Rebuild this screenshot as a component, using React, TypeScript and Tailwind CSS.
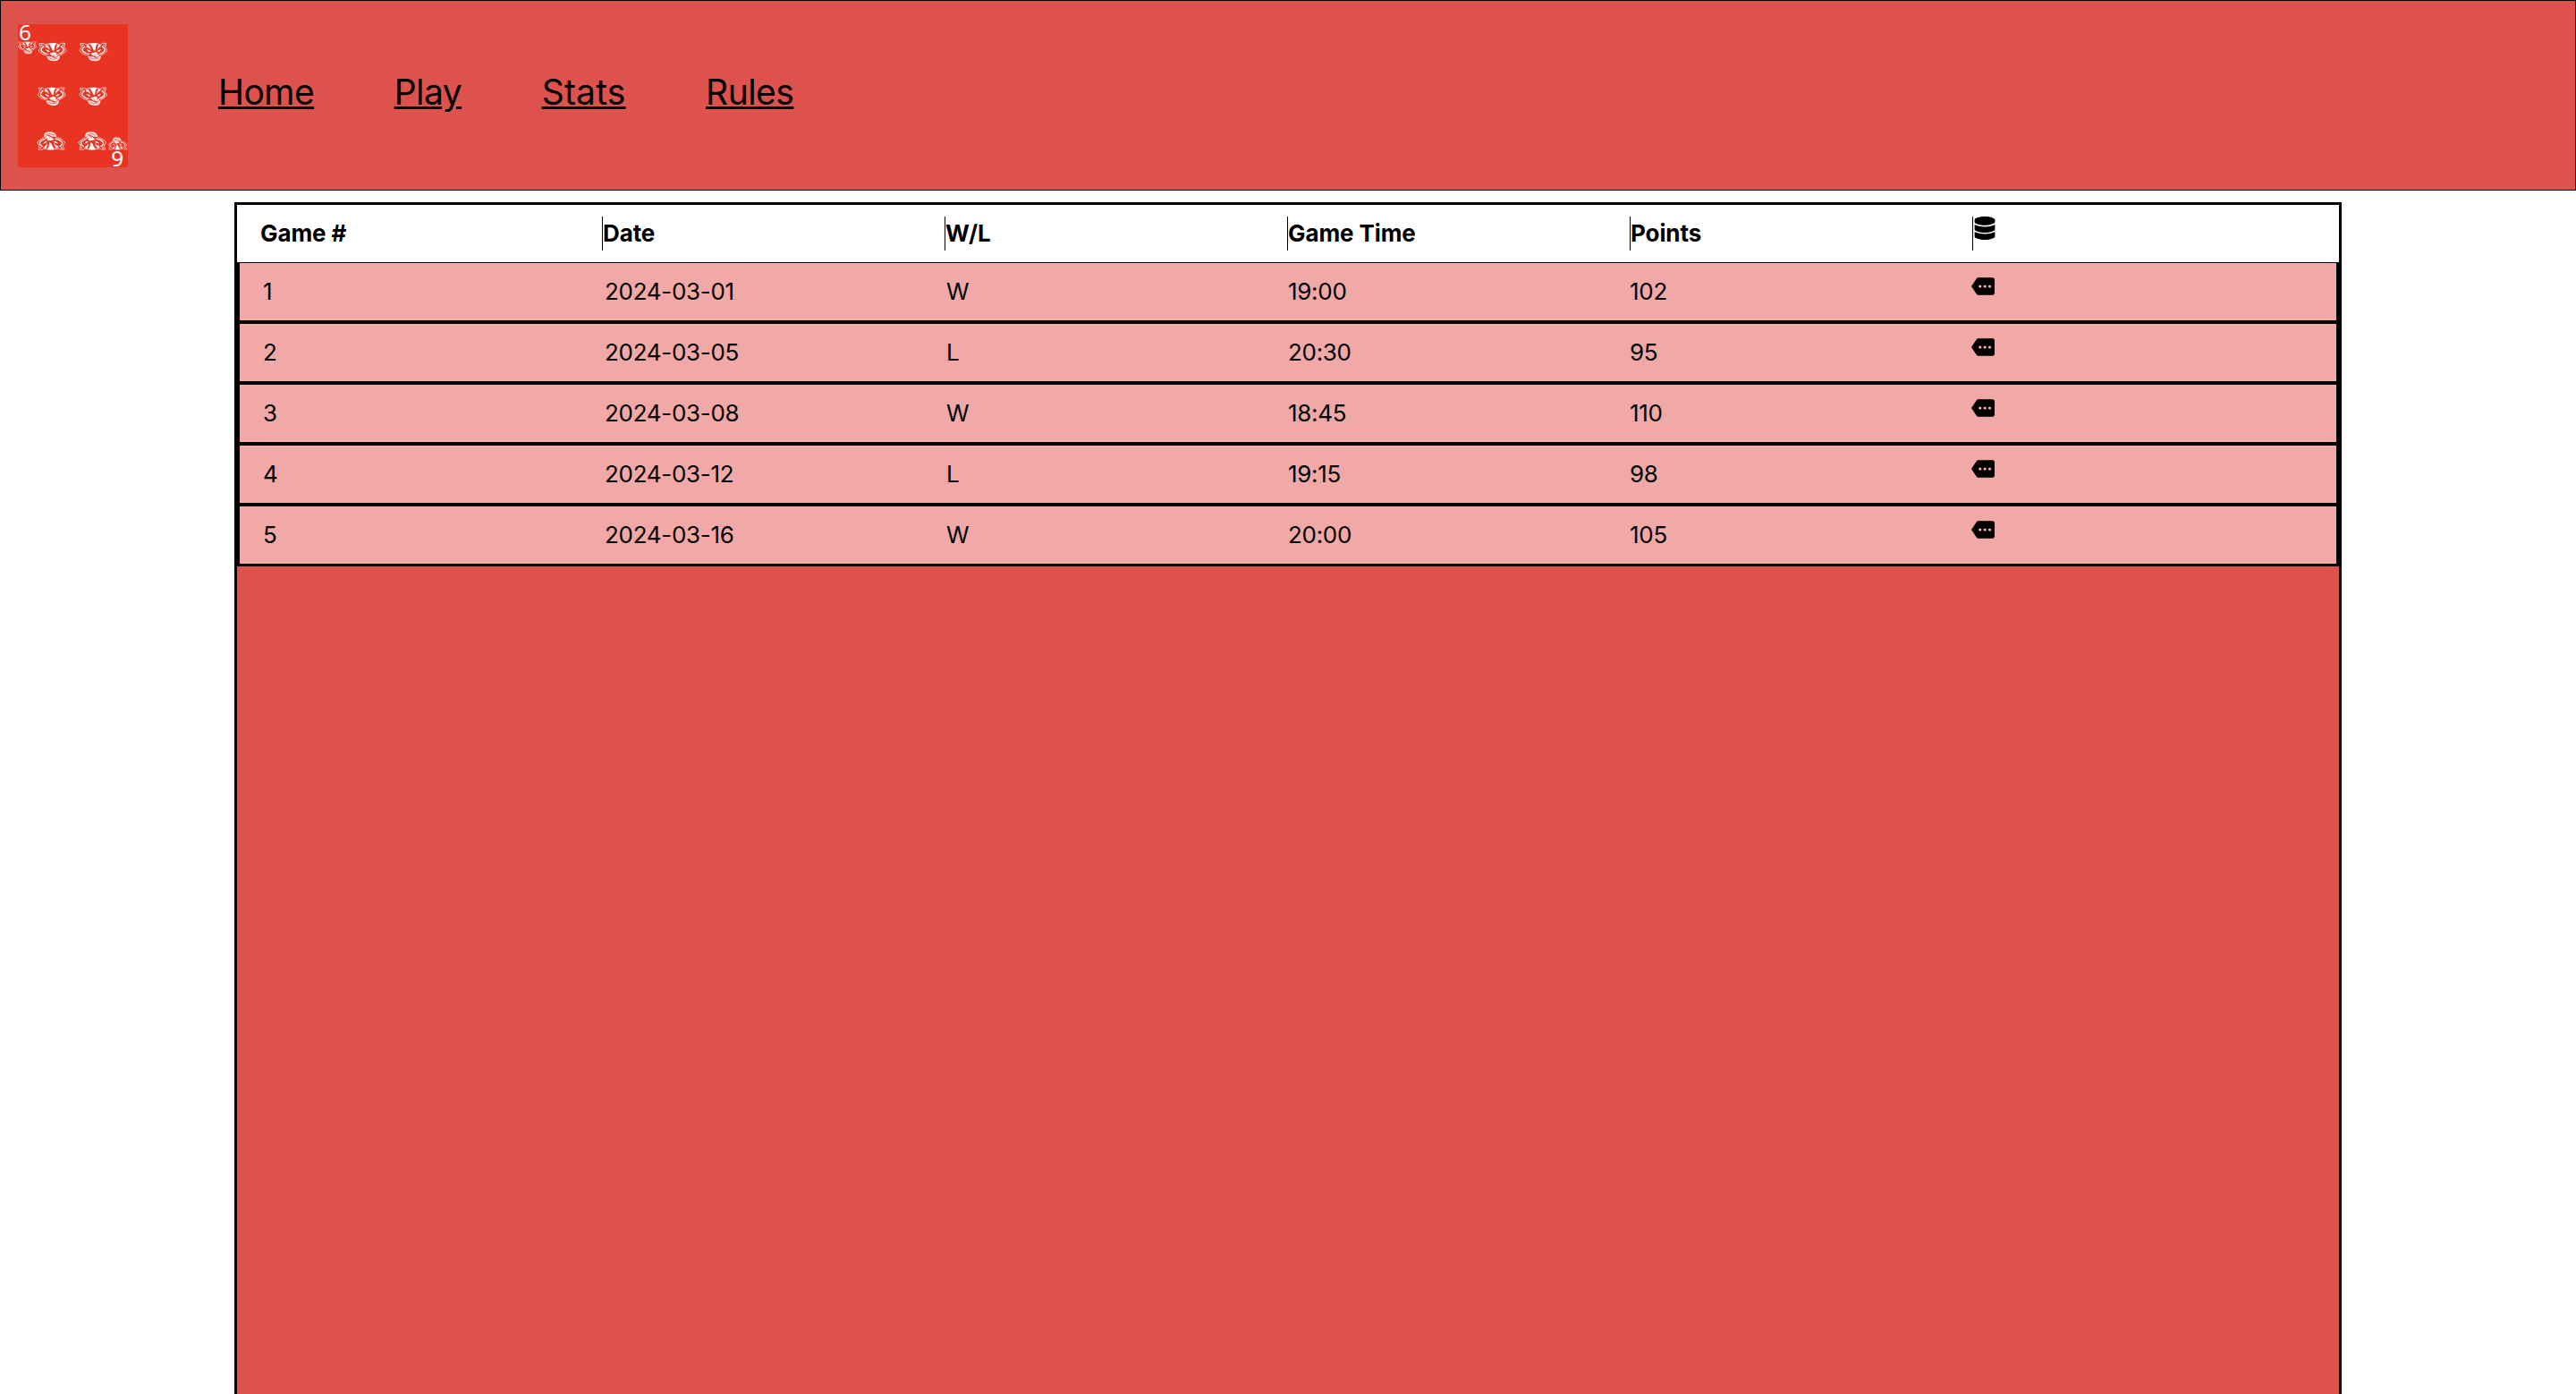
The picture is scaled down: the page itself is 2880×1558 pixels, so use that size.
import { FaDatabase } from "react-icons/fa";
import { MdMore } from "react-icons/md";

const links = ["Home", "Play", "Stats", "Rules"];
const columns = ["Game #", "Date", "W/L", "Game Time", "Points"];
const games = [
  ["1", "2024-03-01", "W", "19:00", "102"],
  ["2", "2024-03-05", "L", "20:30", "95"],
  ["3", "2024-03-08", "W", "18:45", "110"],
  ["4", "2024-03-12", "L", "19:15", "98"],
  ["5", "2024-03-16", "W", "20:00", "105"],
];

function Badger() {
  return (
    <g fill="#fff">
      <path
        d="M3 3 L17 3 Q20 5 22 6 Q48 -2 72 6 L78 2 L90 2 L87 15 L94 27 L84 36 L72 43 M3 3 L8 15 L1 27 L12 37 L29 44"
        fill="none"
        stroke="#fbe3df"
        strokeWidth="2.5"
      />
      <path d="M8 7 L16 7 L12 12 Z M80 7 L86 6 L84 12 Z" fill="#fbe3df" />
      <path d="M19 12 Q6 22 12 29 Q20 37 34 39 M76 12 Q90 22 84 29 Q78 36 68 38" fill="none" stroke="#fff" strokeWidth="4" />
      <path d="M36 3 L60 2 Q54 12 53 28 Q46 25 44 16 Z" />
      <path d="M66 6 L74 9 Q65 15 60 24 Q60 12 66 6 Z" />
      <path d="M23 9 L31 7 Q36 14 40 24 Q33 17 24 15 Z" fill="#fbe3df" />
      <path d="M24 23 Q33 22 40 31 L33 31 Z M75 22 Q65 23 60 29 L67 31 Z" />
      <path d="M44 34 L56 32 L63 36 L57 43 L69 38 Q67 47 58 48 Q47 46 38 37 Z" />
      <path d="M29 45 L44 46 L56 52 L72 43 Q74 61 56 62 Q31 63 29 45 Z" fill="#fbe3df" />
      <path d="M35 51 Q52 60 66 52 M49 40 L55 45" stroke="#e93323" strokeWidth="2" fill="none" />
    </g>
  );
}

const pips = [
  "translate(128 143)",
  "translate(266 143)",
  "translate(126 292)",
  "translate(265 292)",
  "translate(219 504) rotate(180)",
  "translate(357 504) rotate(180)",
  "translate(60 139) scale(.67)",
  "translate(427 503) rotate(180) scale(.68)",
];

function CardLogo() {
  return (
    <svg viewBox="60 81 369 480" className="h-[160px] w-[123px] shrink-0 overflow-visible bg-[#e93323]" role="img" aria-label="Playing card">
      {pips.map((t) => (
        <g key={t} transform={t}>
          <Badger />
        </g>
      ))}
      <text x="63" y="134" fontSize="73" fill="#fff" className="font-['Noto_Sans',sans-serif]">6</text>
      <text x="373" y="559" fontSize="73" fill="#fff" className="font-['Noto_Sans',sans-serif]">9</text>
    </svg>
  );
}

export default function App() {
  return (
    <div className="flex h-[1558px] flex-col overflow-hidden bg-white font-[Inter,sans-serif] text-[26px] leading-[38px] tracking-[-0.3px] text-black">
      <header className="flex h-[213px] shrink-0 items-start border border-black bg-[#dd524c] pl-[19px] pt-[26px]">
        <CardLogo />
        <nav className="ml-[101px] mt-[51px] flex gap-[89.6px] text-[39px] leading-[50px] tracking-[-0.55px]">
          {links.map((l) => (
            <a key={l} href="#" className={l === "Stats" ? "tracking-[0.2px] underline" : "underline"}>{l}</a>
          ))}
        </nav>
      </header>
      <main className="ml-[262px] mt-[13px] h-[1400px] w-[2356px] shrink-0 border-[3px] border-black bg-[#dd524c]">
        <div className="grid grid-cols-6 bg-white px-[26px] py-[13px] font-bold tracking-[-0.1px]">
          {columns.map((c) => (
            <div key={c} className="h-[38px] border-r border-black">{c}</div>
          ))}
          <div className="h-[38px]"><FaDatabase /></div>
        </div>
        {games.map((g) => (
          <div key={g[0]} className="grid h-[68px] grid-cols-6 border-x-[3px] border-b-[3px] border-t border-black bg-[#f0a9a7] px-[26px] py-[13px]">
            {g.map((v, i) => (
              <div key={i}>{v}</div>
            ))}
            <div><MdMore /></div>
          </div>
        ))}
      </main>
    </div>
  );
}
